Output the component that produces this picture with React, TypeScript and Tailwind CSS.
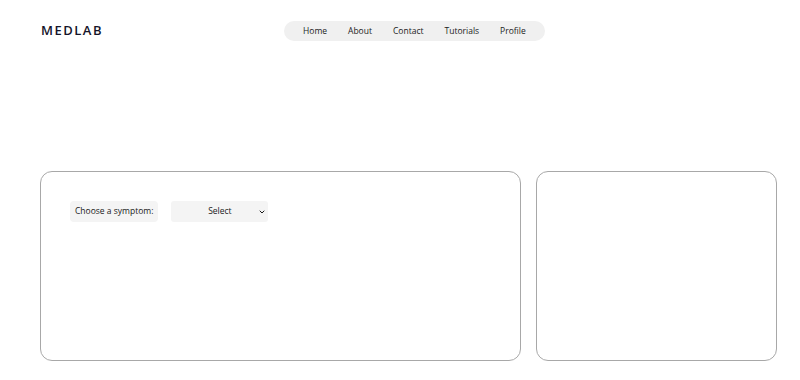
import { ChevronDown } from "lucide-react";

const navItems = ["Home", "About", "Contact", "Tutorials", "Profile"];

export default function App() {
  return (
    <div
      className="w-[800px] h-[380px] bg-white text-[#1a1a1a] overflow-hidden"
      style={{ fontFamily: '"Open Sans", "Noto Sans", sans-serif' }}
    >
      {/* Header */}
      <header className="flex items-center h-[62px] pl-[41px]">
        <div className="w-[243px] text-[13px] font-semibold tracking-[1.5px] text-[#15152a]">
          MEDLAB
        </div>
        <nav className="flex items-center gap-[21px] h-[20px] px-[19px] rounded-full bg-[#f0f0f0] text-[8.5px] text-[#222]">
          {navItems.map((item) => (
            <span key={item}>{item}</span>
          ))}
        </nav>
      </header>

      {/* Panels */}
      <main className="flex gap-[15px] pl-[40px] pt-[109px]">
        <section className="w-[481px] h-[190px] rounded-[12px] border border-[#a8a8a8] px-[29px] pt-[29px]">
          <div className="flex items-center gap-[13px]">
            <div className="h-[21px] px-[5px] flex items-center rounded-[4px] bg-[#f4f4f4] text-[8.5px]">
              Choose a symptom:
            </div>
            <div className="relative w-[97px] h-[21px] flex items-center justify-center rounded-[3px] bg-[#f4f4f4] text-[8.5px]">
              Select
              <ChevronDown
                size={8}
                strokeWidth={3}
                className="absolute right-[2px] top-[7px]"
              />
            </div>
          </div>
        </section>
        <section className="w-[241px] h-[190px] rounded-[12px] border border-[#a8a8a8]" />
      </main>
    </div>
  );
}
